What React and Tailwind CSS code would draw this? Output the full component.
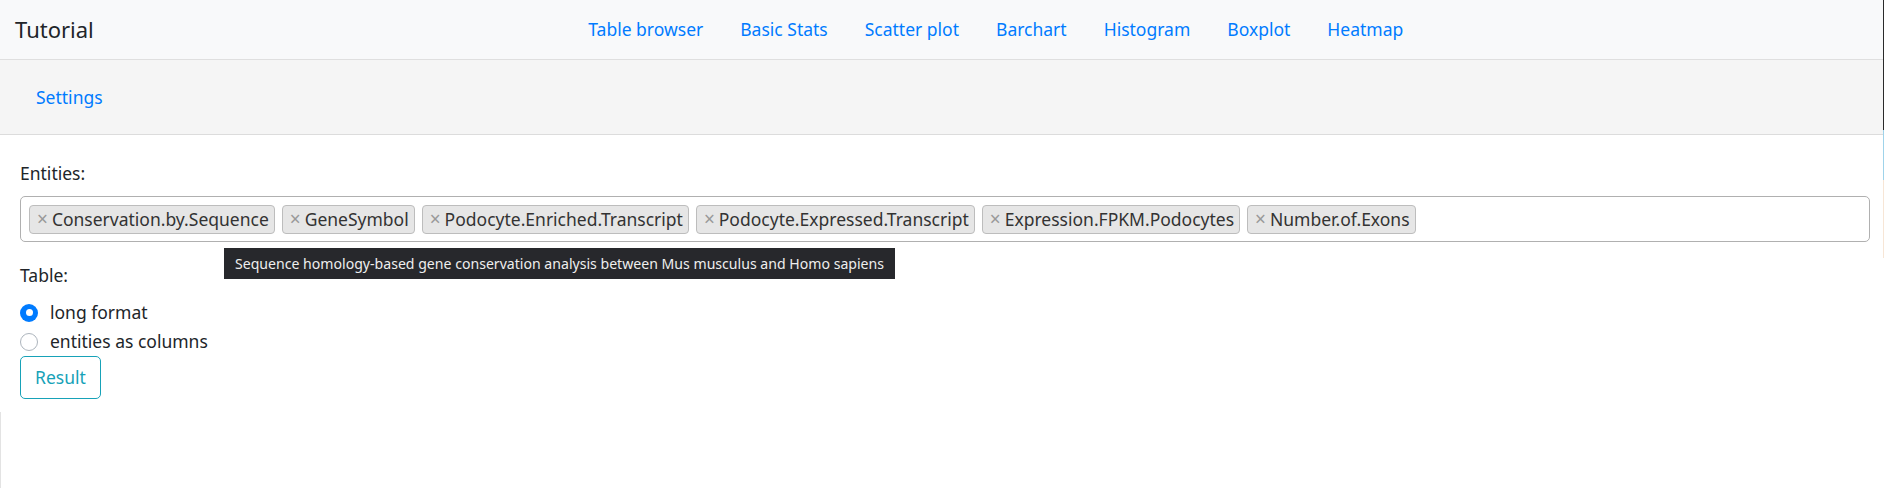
import React, { useState } from "react";

const navLinks = ["Table browser", "Basic Stats", "Scatter plot", "Barchart", "Histogram", "Boxplot", "Heatmap"];

const entities = [
  "Conservation.by.Sequence",
  "GeneSymbol",
  "Podocyte.Enriched.Transcript",
  "Podocyte.Expressed.Transcript",
  "Expression.FPKM.Podocytes",
  "Number.of.Exons",
];

// bootstrap-like custom radio
const Radio = ({ checked, label, onClick }) => (
  <label className="flex items-center gap-[12px] h-[29px] cursor-pointer" onClick={onClick}>
    {checked ? (
      <span className="w-[18px] h-[18px] rounded-full bg-[#007bff] flex items-center justify-center">
        <span className="w-[7px] h-[7px] rounded-full bg-white" />
      </span>
    ) : (
      <span className="w-[18px] h-[18px] rounded-full border border-[#adb5bd] bg-white" />
    )}
    <span className="text-[#212529]">{label}</span>
  </label>
);

export default function App() {
  const [format, setFormat] = useState("long");

  return (
    <div className="flex w-full h-[488px] bg-white font-['Noto_Sans',sans-serif] text-[17.5px] text-[#212529] overflow-hidden">
      <div className="flex-1 flex flex-col min-w-0">
        {/* Navbar */}
        <nav className="h-[60px] shrink-0 bg-[#f8f9fa] border-b border-[#dfdfdf] flex items-center pl-[15px]">
          <span className="text-[22px] text-[#212529]">Tutorial</span>
          <div className="flex items-center ml-[476px]">
            {navLinks.map((l) => (
              <a key={l} href="#" className="px-[18.5px] text-[#007bff]">
                {l}
              </a>
            ))}
          </div>
        </nav>

        {/* Tabs bar */}
        <div className="h-[75px] shrink-0 bg-[#f5f5f5] border-b border-[#dcdcdc] flex items-center pl-[36px]">
          <a href="#" className="text-[#007bff]">Settings</a>
        </div>

        {/* Content */}
        <div className="relative pl-[20px] pr-[13px] pt-[26px]">
          <div className="leading-[24px]">Entities:</div>

          <div className="mt-[11px] h-[46px] border border-[#b0b0b0] rounded-[5px] flex items-center gap-[7px] pl-[8px]">
            {entities.map((e) => (
              <span
                key={e}
                className="h-[29px] flex items-center gap-[4px] pl-[7px] pr-[5px] bg-[#e6e6e6] border border-[#bdbdbd] rounded-[4px] text-[#333]"
              >
                <span className="text-[#999] text-[19px] leading-none">×</span>
                <span>{e}</span>
              </span>
            ))}
          </div>

          {/* tooltip over the GeneSymbol tag */}
          <div className="absolute left-[224px] top-[113px] h-[31px] px-[11px] bg-[#27282c] text-[#eeeeee] text-[14.1px] flex items-center whitespace-nowrap">
            Sequence homology-based gene conservation analysis between Mus musculus and Homo sapiens
          </div>

          <div className="mt-[21px] leading-[24px]">Table:</div>

          <div className="mt-[11px] flex flex-col">
            <Radio checked={format === "long"} label="long format" onClick={() => setFormat("long")} />
            <Radio checked={format === "cols"} label="entities as columns" onClick={() => setFormat("cols")} />
          </div>

          <button className="mt-0 h-[43px] px-[14px] border border-[#17a2b8] rounded-[5px] text-[#17a2b8] bg-white">
            Result
          </button>
        </div>

        <div className="mt-auto h-[76px] w-px bg-[#e3e3e3]" />
      </div>

      {/* window edge */}
      <div className="w-px shrink-0 flex flex-col">
        <div className="h-[130px] bg-[#2a2a2a]" />
        <div className="h-[50px] bg-[#9fd3ea]" />
        <div className="h-[78px] bg-[#f7e6d6]" />
      </div>
    </div>
  );
}
